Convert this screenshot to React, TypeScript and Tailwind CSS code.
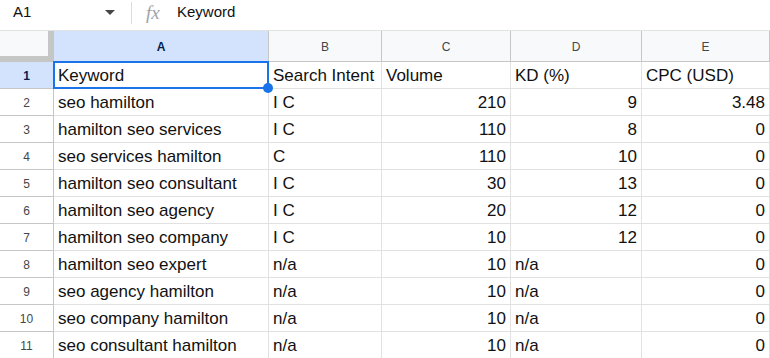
import React from 'react';

type Row = [string, string, string, string, string];

const rows: Row[] = [
  ['Keyword', 'Search Intent', 'Volume', 'KD (%)', 'CPC (USD)'],
  ['seo hamilton', 'I C', '210', '9', '3.48'],
  ['hamilton seo services', 'I C', '110', '8', '0'],
  ['seo services hamilton', 'C', '110', '10', '0'],
  ['hamilton seo consultant', 'I C', '30', '13', '0'],
  ['hamilton seo agency', 'I C', '20', '12', '0'],
  ['hamilton seo company', 'I C', '10', '12', '0'],
  ['hamilton seo expert', 'n/a', '10', 'n/a', '0'],
  ['seo agency hamilton', 'n/a', '10', 'n/a', '0'],
  ['seo company hamilton', 'n/a', '10', 'n/a', '0'],
  ['seo consultant hamilton', 'n/a', '10', 'n/a', '0'],
];

const cols = ['A', 'B', 'C', 'D', 'E'];

// numbers sit on the right like Sheets does by default
const isNum = (v: string) => /^[0-9.]+$/.test(v);

export default function App() {
  return (
    <div className="w-[770px] h-[358px] overflow-hidden bg-white text-[#111]" style={{ fontFamily: '"Liberation Sans", Arial, sans-serif' }}>
      {/* name box + formula bar */}
      <div className="h-[31px] flex items-center pb-[5px] border-b border-[#e1e3e1]">
        <div className="w-[131px] flex items-center pl-[13px] pr-[16px]">
          <span className="text-[15px] flex-1">A1</span>
          <svg width="10" height="6" viewBox="0 0 10 6">
            <path d="M0 0 L10 0 L5 5 Z" fill="#444746" />
          </svg>
        </div>
        <div className="w-px h-[22px] bg-[#dadce0]" />
        <span className="ml-[14px] w-[22px] text-[19px] italic text-[#a0a4a8] leading-none" style={{ fontFamily: '"Liberation Serif", "DejaVu Serif", serif' }}>fx</span>
        <span className="ml-[9px] text-[15px]">Keyword</span>
      </div>

      <div className="relative">
        <div className="grid grid-cols-[54px_215px_113px_129px_131px_1fr]">
          {/* header row */}
          <div className="h-[31px] bg-[#f8f9fa] border-r-[6px] border-b-[6px] border-[#c4c7c5]" />
          {cols.map((c, i) => (
            <div
              key={c}
              className={`h-[31px] flex items-center justify-center pt-[1px] text-[12px] border-r border-b border-[#c4c7c5] ${
                i === 0 ? 'bg-[#d3e3fd] font-bold text-[#041e49]' : 'bg-[#f8f9fa] text-[#444746]'
              }`}
            >
              {c}
            </div>
          ))}

          {rows.map((r, ri) => (
            <React.Fragment key={ri}>
              <div
                className={`h-[27px] flex items-center justify-center pt-[2px] text-[12px] border-r border-b border-[#c4c7c5] ${
                  ri === 0 ? 'bg-[#d3e3fd] font-bold text-[#041e49]' : 'bg-white text-[#444746]'
                }`}
              >
                {ri + 1}
              </div>
              {r.map((v, ci) => (
                <div
                  key={ci}
                  className={`h-[27px] flex items-center px-[4px] pt-[2px] text-[17px] whitespace-nowrap overflow-hidden border-r border-b border-[#e1e1e1] ${
                    isNum(v) ? 'justify-end' : 'justify-start'
                  }`}
                >
                  {v}
                </div>
              ))}
            </React.Fragment>
          ))}
        </div>

        {/* active cell A1 */}
        <div className="absolute left-[53px] top-[30px] w-[216px] h-[28px] border-2 border-[#1a73e8] pointer-events-none">
          <div className="absolute -right-[6px] -bottom-[6px] w-[10px] h-[10px] rounded-full bg-[#1a73e8]" />
        </div>
      </div>
    </div>
  );
}
